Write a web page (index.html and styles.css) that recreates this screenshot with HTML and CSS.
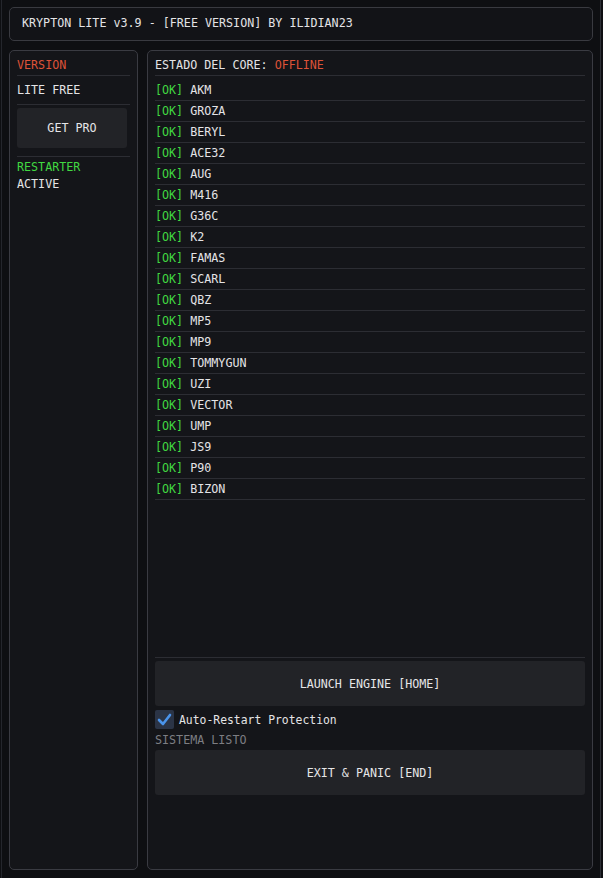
FILE: index.html
```html
<!DOCTYPE html>
<html>
<head>
<meta charset="utf-8">
<link rel="stylesheet" href="styles.css">
</head>
<body>
<div class="app">
  <header class="titlebar">KRYPTON LITE v3.9 - [FREE VERSION] BY ILIDIAN23</header>
  <main class="main">
    <aside class="panel side">
      <div class="line red">VERSION</div>
      <div class="sep sep-a"></div>
      <div class="line gap7">LITE FREE</div>
      <div class="sep sep-b"></div>
      <button class="btn pro">GET PRO</button>
      <div class="sep sep-c"></div>
      <div class="line green gap3">RESTARTER</div>
      <div class="line gap3">ACTIVE</div>
    </aside>
    <section class="panel core">
      <div class="line">ESTADO DEL CORE: <span class="red">OFFLINE</span></div>
      <div class="sep sep-a"></div>
      <ul class="list">
        <li><span class="green">[OK]</span> AKM</li>
        <li><span class="green">[OK]</span> GROZA</li>
        <li><span class="green">[OK]</span> BERYL</li>
        <li><span class="green">[OK]</span> ACE32</li>
        <li><span class="green">[OK]</span> AUG</li>
        <li><span class="green">[OK]</span> M416</li>
        <li><span class="green">[OK]</span> G36C</li>
        <li><span class="green">[OK]</span> K2</li>
        <li><span class="green">[OK]</span> FAMAS</li>
        <li><span class="green">[OK]</span> SCARL</li>
        <li><span class="green">[OK]</span> QBZ</li>
        <li><span class="green">[OK]</span> MP5</li>
        <li><span class="green">[OK]</span> MP9</li>
        <li><span class="green">[OK]</span> TOMMYGUN</li>
        <li><span class="green">[OK]</span> UZI</li>
        <li><span class="green">[OK]</span> VECTOR</li>
        <li><span class="green">[OK]</span> UMP</li>
        <li><span class="green">[OK]</span> JS9</li>
        <li><span class="green">[OK]</span> P90</li>
        <li><span class="green">[OK]</span> BIZON</li>
      </ul>
      <div class="controls">
        <div class="sep"></div>
        <button class="btn big launch">LAUNCH ENGINE [HOME]</button>
        <label class="check">
          <span class="box">
            <svg width="15" height="13" viewBox="0 0 15 13"><path d="M2 7 L6 11 L13 2" fill="none" stroke="#4a94ec" stroke-width="2.6" stroke-linecap="round" stroke-linejoin="round"/></svg>
          </span>
          <span class="check-label">Auto-Restart Protection</span>
        </label>
        <div class="line muted status">SISTEMA LISTO</div>
        <button class="btn big exit">EXIT &amp; PANIC [END]</button>
      </div>
    </section>
  </main>
</div>
</body>
</html>
```

FILE: styles.css
```css
* { box-sizing: border-box; }
html, body {
  margin: 0;
  padding: 0;
  background: #0e0f12;
}
body {
  font-family: "DejaVu Sans Mono", "Liberation Mono", monospace;
  font-size: 11.7px;
  color: #e4e4e6;
}
.app {
  height: 878px;
  margin: 0 2px 0 1px;
  border-left: 1px solid #24262c;
  border-right: 1px solid #2c2e35;
  padding: 7px 7px 8px 7px;
  display: flex;
  flex-direction: column;
}
.titlebar {
  height: 34px;
  border: 1px solid #393a40;
  border-radius: 5px;
  background: #121317;
  padding: 8px 0 0 12px;
  line-height: 14px;
  white-space: pre;
}
.main {
  margin-top: 9px;
  flex: 1;
  display: grid;
  grid-template-columns: 129px 1fr;
  gap: 9px;
}
.panel {
  border: 1px solid #3a3b42;
  border-radius: 5px;
  background: #141519;
  padding: 7px 7px 0 7px;
  display: flex;
  flex-direction: column;
}
.line {
  line-height: 14px;
  height: 14px;
  white-space: pre;
}
.red { color: #dd5238; }
.green { color: #41d841; }
.muted { color: #7d7e83; }
.sep {
  height: 1px;
  background: #2c2d33;
  flex: none;
}
.sep-a { margin-top: 3px; }
.gap7 { margin-top: 7px; }
.gap3 { margin-top: 3px; }
.sep-b { margin-top: 7px; }
.sep-c { margin-top: 8px; }
.btn {
  font: inherit;
  color: #e6e6e8;
  background: #222327;
  border: none;
  border-radius: 3px;
  padding: 0;
  display: flex;
  align-items: center;
  justify-content: center;
  flex: none;
}
.pro {
  margin-top: 3px;
  width: 110px;
  height: 40px;
}
.list {
  list-style: none;
  margin: 4px 0 0 0;
  padding: 0;
  flex: 1;
}
.list li {
  line-height: 14px;
  padding: 3px 0;
  border-bottom: 1px solid #2c2d33;
  white-space: pre;
}
.controls {
  display: flex;
  flex-direction: column;
  padding-bottom: 74px;
}
.big {
  width: 100%;
  height: 45px;
  padding-top: 1px;
}
.launch { margin-top: 3px; }
.check {
  margin-top: 4px;
  display: flex;
  align-items: center;
  gap: 5px;
  height: 19px;
}
.box {
  width: 19px;
  height: 19px;
  border-radius: 2px;
  background-color: #2b3446;
  background-image: radial-gradient(circle, #3a4660 40%, transparent 41%);
  background-size: 2px 2px;
  display: flex;
  align-items: center;
  justify-content: center;
}
.check-label {
  font-family: "DejaVu Sans Mono", monospace;
  font-size: 11.4px;
  color: #e4e4e6;
}
.status { margin-top: 4px; }
.exit { margin-top: 3px; }
```
